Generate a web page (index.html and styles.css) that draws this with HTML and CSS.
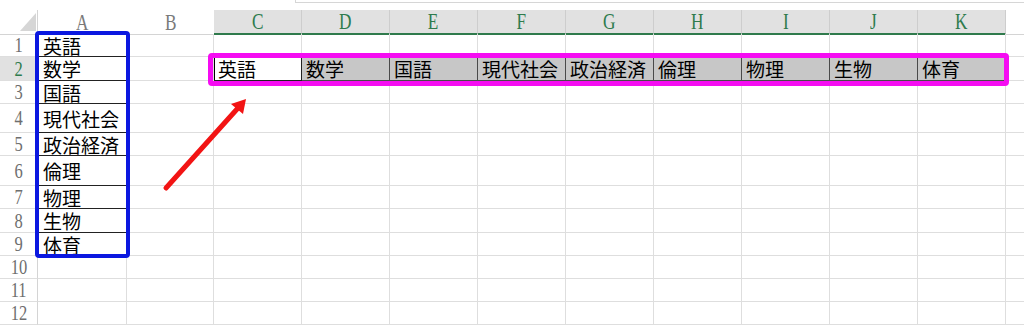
FILE: index.html
```html
<!DOCTYPE html>
<html lang="ja">
<head>
    <meta charset="UTF-8">
    <title>科目一覧</title>
    <link rel="stylesheet" href="styles.css">
</head>
<body>
    <div class="page">
        <div class="topbar"><div class="formula"></div></div>

        <!-- 列見出し -->
        <div class="row head">
            <div class="corner">
                <svg width="38" height="24" viewBox="0 0 38 24"><polygon points="36,3 36,21 20,21" fill="#d6d6d6"/></svg>
            </div>
            <div class="col"><span>A</span></div>
            <div class="col"><span>B</span></div>
            <div class="col sel"><span>C</span></div>
            <div class="col sel"><span>D</span></div>
            <div class="col sel"><span>E</span></div>
            <div class="col sel"><span>F</span></div>
            <div class="col sel"><span>G</span></div>
            <div class="col sel"><span>H</span></div>
            <div class="col sel"><span>I</span></div>
            <div class="col sel"><span>J</span></div>
            <div class="col sel"><span>K</span></div>
            <div class="col tail"></div>
        </div>

        <div class="row">
            <div class="rh"><span>1</span></div>
            <div class="cell lined">英語</div>
            <div class="cell"></div><div class="cell"></div><div class="cell"></div><div class="cell"></div><div class="cell"></div>
            <div class="cell"></div><div class="cell"></div><div class="cell"></div><div class="cell"></div><div class="cell"></div>
            <div class="cell tail"></div>
        </div>

        <div class="row h24">
            <div class="rh on"><span>2</span></div>
            <div class="cell lined">数学</div>
            <div class="cell"></div>
            <div class="cell active">英語</div>
            <div class="cell pick">数学</div>
            <div class="cell pick">国語</div>
            <div class="cell pick">現代社会</div>
            <div class="cell pick">政治経済</div>
            <div class="cell pick">倫理</div>
            <div class="cell pick">物理</div>
            <div class="cell pick">生物</div>
            <div class="cell pick">体育</div>
            <div class="cell tail"></div>
        </div>

        <div class="row">
            <div class="rh"><span>3</span></div>
            <div class="cell lined">国語</div>
            <div class="cell"></div><div class="cell"></div><div class="cell"></div><div class="cell"></div><div class="cell"></div>
            <div class="cell"></div><div class="cell"></div><div class="cell"></div><div class="cell"></div><div class="cell"></div>
            <div class="cell tail"></div>
        </div>

        <div class="row h29">
            <div class="rh"><span>4</span></div>
            <div class="cell lined">現代社会</div>
            <div class="cell"></div><div class="cell"></div><div class="cell"></div><div class="cell"></div><div class="cell"></div>
            <div class="cell"></div><div class="cell"></div><div class="cell"></div><div class="cell"></div><div class="cell"></div>
            <div class="cell tail"></div>
        </div>

        <div class="row">
            <div class="rh"><span>5</span></div>
            <div class="cell lined">政治経済</div>
            <div class="cell"></div><div class="cell"></div><div class="cell"></div><div class="cell"></div><div class="cell"></div>
            <div class="cell"></div><div class="cell"></div><div class="cell"></div><div class="cell"></div><div class="cell"></div>
            <div class="cell tail"></div>
        </div>

        <div class="row h30">
            <div class="rh"><span>6</span></div>
            <div class="cell lined">倫理</div>
            <div class="cell"></div><div class="cell"></div><div class="cell"></div><div class="cell"></div><div class="cell"></div>
            <div class="cell"></div><div class="cell"></div><div class="cell"></div><div class="cell"></div><div class="cell"></div>
            <div class="cell tail"></div>
        </div>

        <div class="row">
            <div class="rh"><span>7</span></div>
            <div class="cell lined">物理</div>
            <div class="cell"></div><div class="cell"></div><div class="cell"></div><div class="cell"></div><div class="cell"></div>
            <div class="cell"></div><div class="cell"></div><div class="cell"></div><div class="cell"></div><div class="cell"></div>
            <div class="cell tail"></div>
        </div>

        <div class="row h24">
            <div class="rh"><span>8</span></div>
            <div class="cell lined">生物</div>
            <div class="cell"></div><div class="cell"></div><div class="cell"></div><div class="cell"></div><div class="cell"></div>
            <div class="cell"></div><div class="cell"></div><div class="cell"></div><div class="cell"></div><div class="cell"></div>
            <div class="cell tail"></div>
        </div>

        <div class="row">
            <div class="rh"><span>9</span></div>
            <div class="cell lined">体育</div>
            <div class="cell"></div><div class="cell"></div><div class="cell"></div><div class="cell"></div><div class="cell"></div>
            <div class="cell"></div><div class="cell"></div><div class="cell"></div><div class="cell"></div><div class="cell"></div>
            <div class="cell tail"></div>
        </div>

        <div class="row">
            <div class="rh"><span>10</span></div>
            <div class="cell"></div>
            <div class="cell"></div><div class="cell"></div><div class="cell"></div><div class="cell"></div><div class="cell"></div>
            <div class="cell"></div><div class="cell"></div><div class="cell"></div><div class="cell"></div><div class="cell"></div>
            <div class="cell tail"></div>
        </div>

        <div class="row">
            <div class="rh"><span>11</span></div>
            <div class="cell"></div>
            <div class="cell"></div><div class="cell"></div><div class="cell"></div><div class="cell"></div><div class="cell"></div>
            <div class="cell"></div><div class="cell"></div><div class="cell"></div><div class="cell"></div><div class="cell"></div>
            <div class="cell tail"></div>
        </div>

        <div class="row">
            <div class="rh"><span>12</span></div>
            <div class="cell"></div>
            <div class="cell"></div><div class="cell"></div><div class="cell"></div><div class="cell"></div><div class="cell"></div>
            <div class="cell"></div><div class="cell"></div><div class="cell"></div><div class="cell"></div><div class="cell"></div>
            <div class="cell tail"></div>
        </div>

        <!-- 注釈: 枠と矢印 -->
        <div class="mark mark-list"></div>
        <div class="mark mark-row"></div>
        <svg class="arrow" width="96" height="104" viewBox="0 0 96 104">
            <line x1="8" y1="96" x2="80" y2="16" stroke="#f21414" stroke-width="5" stroke-linecap="round"/>
            <polygon points="88,7 85,22 73,12" fill="#f21414"/>
        </svg>
    </div>
</body>
</html>
```

FILE: styles.css
```css
* {
    margin: 0;
    padding: 0;
    box-sizing: border-box;
}

body {
    background-color: #fff;
    font-family: "Noto Sans CJK JP", sans-serif;
}

.page {
    position: relative;
    width: 1024px;
    height: 325px;
    overflow: hidden;
}

/* 数式バーの下端 */
.topbar {
    height: 10px;
}

.formula {
    margin-left: 295px;
    height: 3px;
    border-left: 1px solid #d6d6d6;
    border-bottom: 1px solid #d6d6d6;
}

/* シートの行 */
.row {
    display: grid;
    grid-template-columns: 38px 89px 87px repeat(9, 88px) 1fr;
    height: 23px;
}

.row.head { height: 24px; }
.row.h24 { height: 24px; }
.row.h29 { height: 29px; }
.row.h30 { height: 30px; }

.corner {
    border-right: 1px solid #d4d4d4;
    border-bottom: 1px solid #d4d4d4;
}

.corner svg {
    display: block;
}

.col {
    display: flex;
    align-items: center;
    justify-content: center;
    font-family: "Liberation Serif", serif;
    font-size: 23px;
    line-height: 1;
    color: #7a7a7a;
    border-bottom: 1px solid #d4d4d4;
}

.col span,
.rh span {
    display: inline-block;
    transform: scaleX(0.75);
}

.col.sel {
    background-color: #e1e1e1;
    color: #2e7b4d;
    border-right: 1px solid #cdcdcd;
    border-bottom: 2px solid #2f7a4c;
}

.col.tail {
    border-right: none;
}

/* 行番号 */
.rh {
    display: flex;
    align-items: center;
    justify-content: center;
    font-family: "Liberation Serif", serif;
    font-size: 22px;
    line-height: 1;
    color: #6e6e6e;
    border-right: 1px solid #d4d4d4;
    border-bottom: 1px solid #dedede;
}

.rh.on {
    background-color: #e1e1e1;
    color: #2e7b4d;
}

/* セル */
.cell {
    display: flex;
    align-items: center;
    padding-left: 5px;
    font-size: 19px;
    line-height: 1;
    color: #000;
    white-space: nowrap;
    border-right: 1px solid #dedede;
    border-bottom: 1px solid #dedede;
}

.cell.tail {
    border-right: none;
}

.cell.lined {
    border-bottom-color: #222;
}

.cell.active {
    padding-left: 4px;
    background-color: #fff;
    box-shadow: inset 1px 0 0 #000;
    border-right-color: #222;
    border-bottom-color: #222;
}

.cell.pick {
    padding-left: 4px;
    background-color: #c7c7c7;
    border-right-color: #4a4a4a;
    border-bottom-color: #4a4a4a;
}

/* 注釈の枠 */
.mark {
    position: absolute;
    border-radius: 4px;
    pointer-events: none;
}

.mark-list {
    left: 35px;
    top: 31px;
    width: 95px;
    height: 227px;
    border: 4px solid #0b18e0;
}

.mark-row {
    left: 208px;
    top: 53px;
    width: 801px;
    height: 33px;
    border: 5px solid #f50cf2;
}

.arrow {
    position: absolute;
    left: 158px;
    top: 92px;
}
```
